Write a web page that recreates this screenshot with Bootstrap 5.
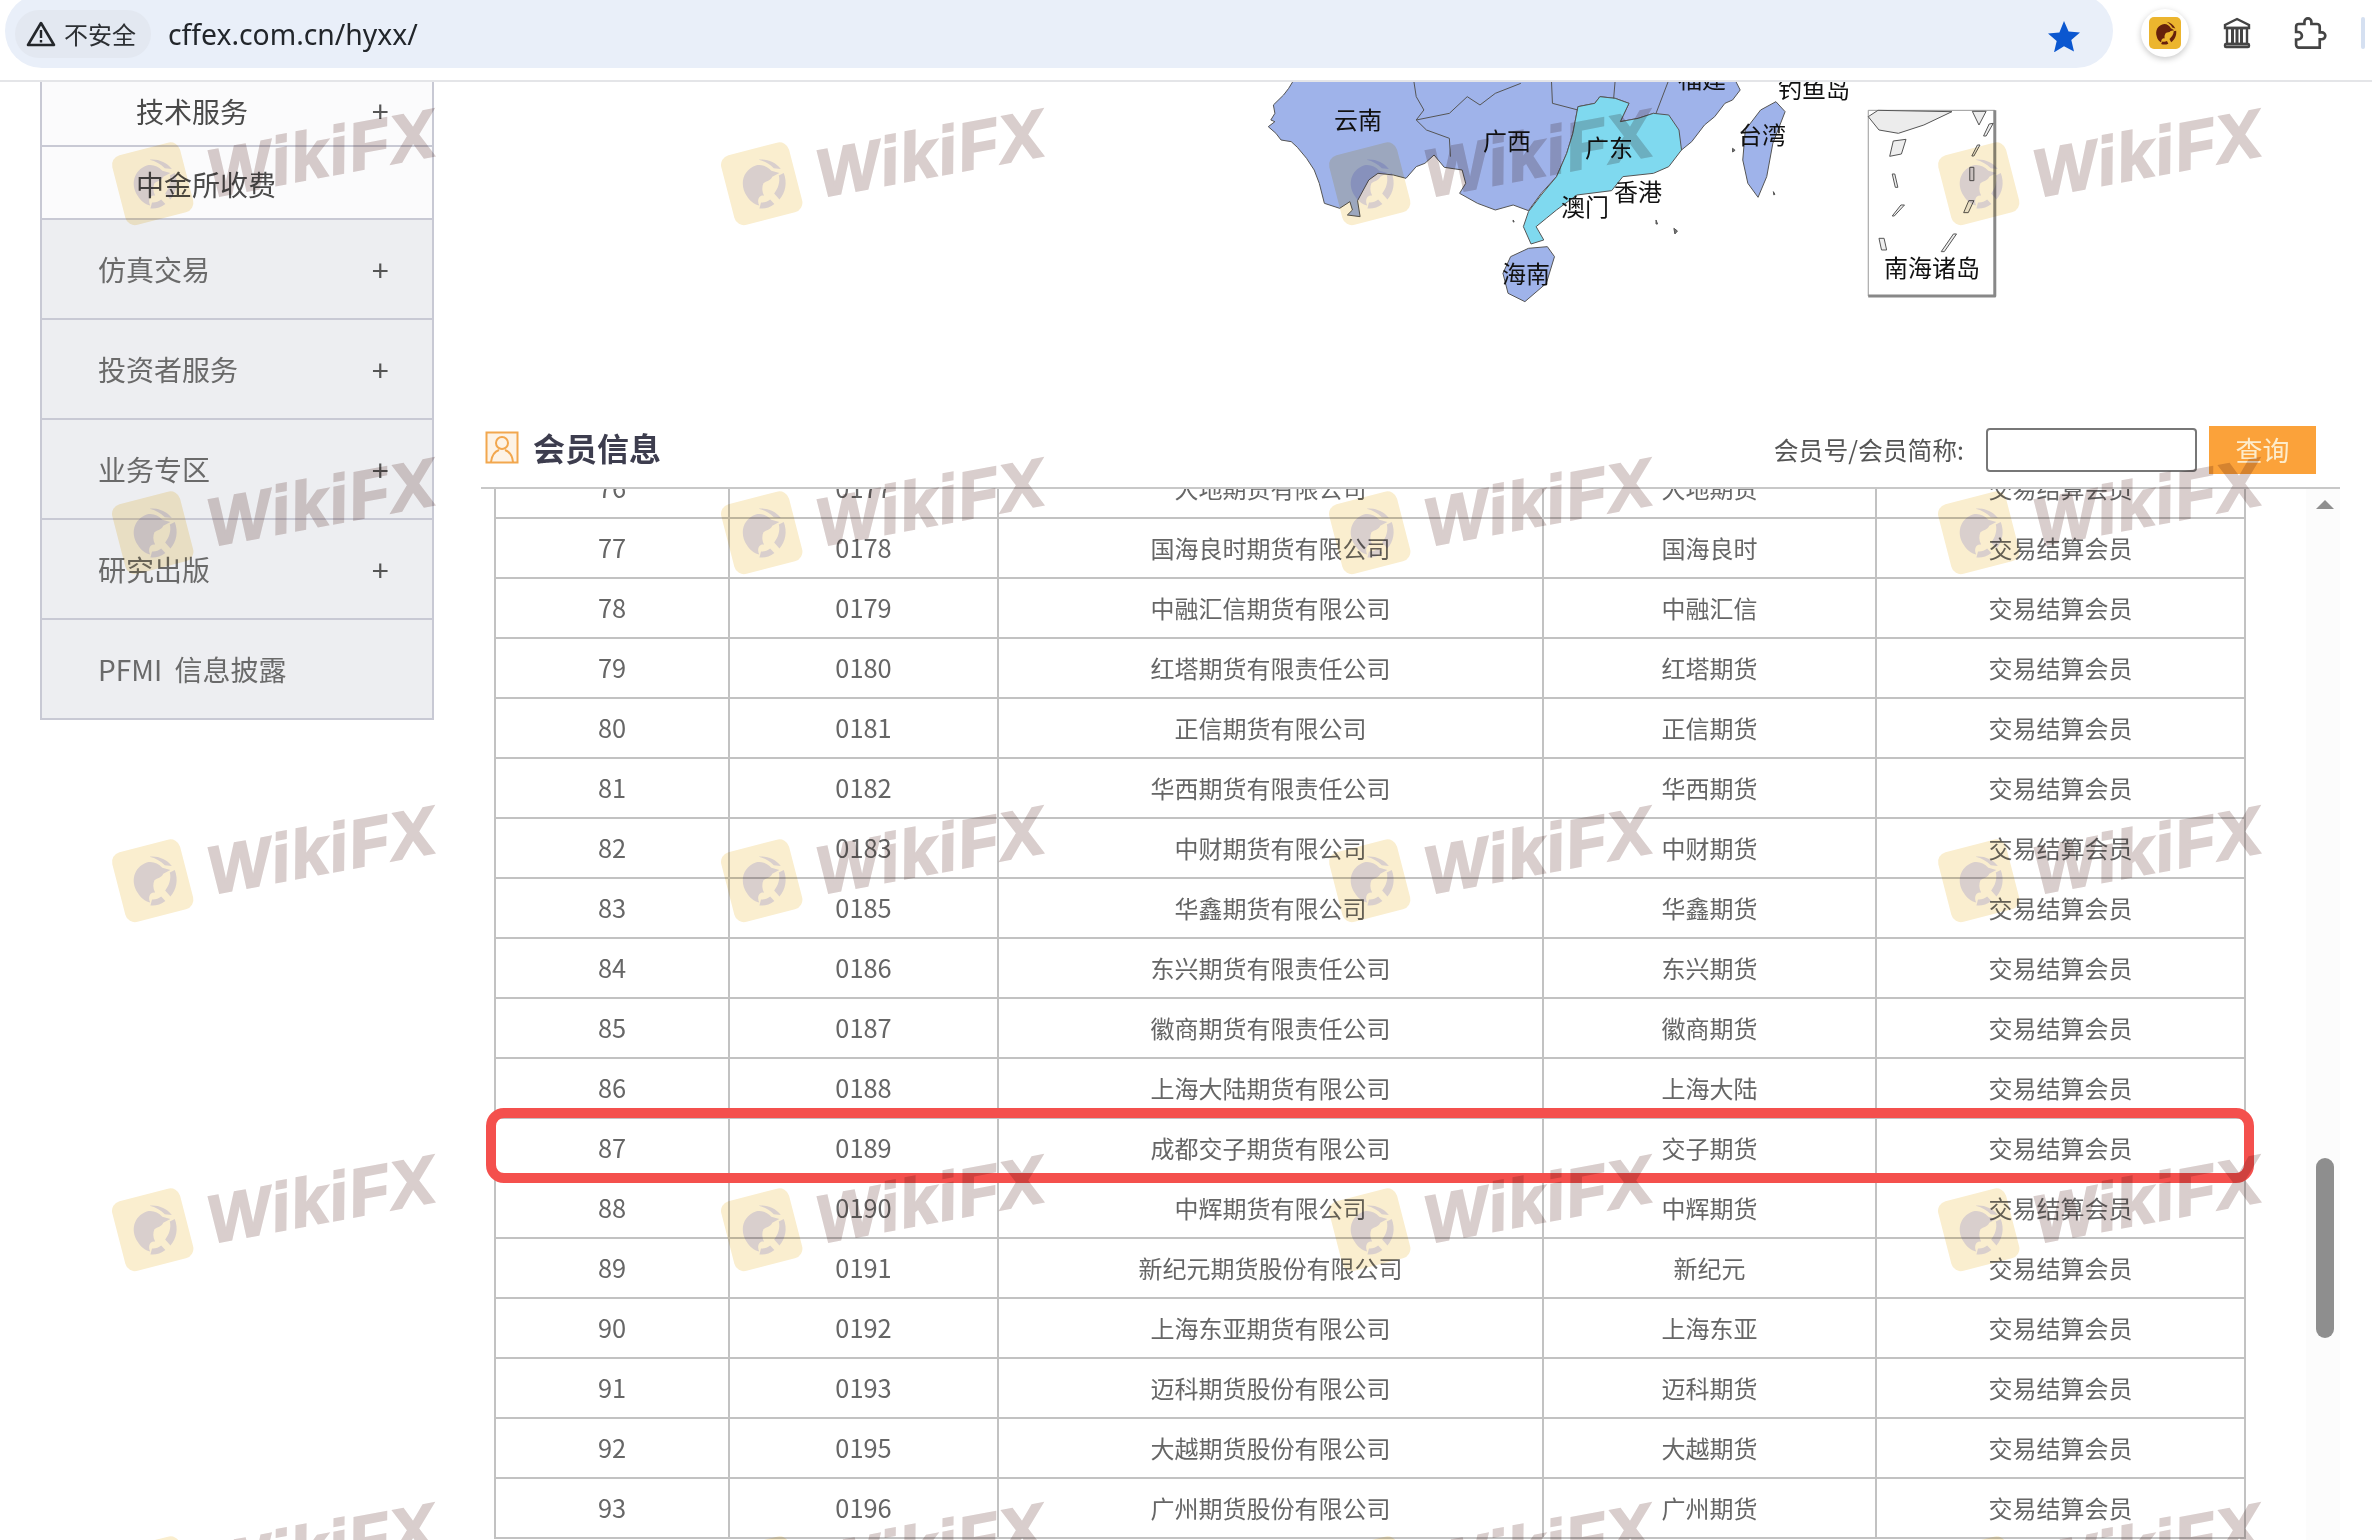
<!DOCTYPE html>
<html lang="zh-CN">
<head>
<meta charset="utf-8">
<title>cffex.com.cn/hyxx/</title>
<link href="https://cdn.jsdelivr.net/npm/bootstrap@5.3.0/dist/css/bootstrap.min.css" rel="stylesheet">
<style>
html,body{margin:0;background:#fff;}
body{font-family:"Noto Sans CJK SC","Noto Sans",sans-serif;}
.frame{width:2372px;height:1540px;overflow:hidden;background:#fff;}
.browser-bar{height:82px;flex:none;border-bottom:2px solid #e4e5e8;background:#fff;position:relative;z-index:5;}
.omni{width:2108px;height:74px;margin:-6px 0 0 5px;padding:0 32px 0 10px;background:#e9eff9;border-radius:37px;}
.chip{height:48px;width:136px;margin-top:6px;padding-left:11px;gap:8px;background:#e3e8f1;border-radius:24px;font-size:24px;color:#2c2f33;}
.url{margin:6px 0 0 17px;font-family:"Noto Sans",sans-serif;font-size:28.3px;color:#22262b;}
.star-ico{margin-top:10px;}
.ext-ring{width:48px;height:48px;margin-left:28px;background:#fff;border-radius:50%;box-shadow:0 2px 6px rgba(0,0,0,.22);}
.ext-logo{width:32px;height:32px;background:#ecb52e;border-radius:5px;}
.bank-ico{margin-left:34px;}
.puzzle-ico{margin-left:42px;}
.sep-bar{width:4px;height:32px;margin-left:34px;background:#d5e0f1;border-radius:2px;}
.tools{height:66px;}

.page-body{min-height:0;}
.side-menu{width:394px;flex:none;margin-left:40px;align-self:flex-start;border:solid #c8c9d4;border-width:0 2px;border-radius:0;}
.side-item{display:flex;align-items:center;justify-content:space-between;height:100px;padding:0 43px 0 56px;background:#edeef1;color:#6a6a6a;font-size:28px;border:0;border-bottom:2px solid #c8c9d4;border-radius:0!important;}
.side-sub{height:73px;padding-left:94px;padding-top:2px;background:#fbfbfc;color:#4a4a4a;}
.side-sub.top-sub{height:65px;padding-top:0;padding-bottom:6px;}
.side-latin{word-spacing:6px;}
.plus{font-family:"Liberation Sans",sans-serif;font-size:30px;font-weight:400;line-height:1;color:#555;padding-top:3px;}

.main-col{min-width:0;}
.map-zone{height:338px;position:relative;overflow:hidden;}
.map-svg{position:absolute;left:796px;top:-12px;}
.map-svg text{font-family:"Noto Sans CJK SC",sans-serif;font-size:24px;fill:#111;text-anchor:middle;dominant-baseline:central;}
.panel-head{height:69px;margin:0 32px 0 47px;padding:0 24px 13px 4px;border-bottom:2px solid #c8c8c8;}
.panel-title{margin:0 0 0 14px;font-size:32px;line-height:1;font-weight:700;color:#3d3d4e;}
.find-group{margin-top:6px;}
.find-label{font-size:24.8px;color:#555;margin-right:22px;}
.find-input{width:211px;height:44px;border:2px solid #777;border-radius:4px;background:#fff;margin-right:12px;padding:0 8px;}
.find-btn{width:107px;height:48px;padding:0;border:0;border-radius:0;background:#fba23a;color:#fdeccb;font-size:27px;}

.scroll-zone{flex:1;min-height:0;overflow:hidden;margin:0 32px 0 47px;position:relative;}
.member-table{width:1752px;margin:-32px 0 0 13px;table-layout:fixed;--bs-table-border-color:#c2c2c2;--bs-table-color:#666;--bs-table-bg:#fff;}
.member-table td{height:60px;padding:0;font-size:24px;line-height:1;border-width:2px;border-color:#c2c2c2;color:#666;text-align:center;vertical-align:middle;}
.member-table td:nth-child(-n+2){font-size:25.4px;}
.sb-track{position:absolute;right:0;top:0;bottom:0;width:34px;background:#fcfcfc;}
.sb-up{position:absolute;left:10px;top:11px;width:0;height:0;border:solid transparent;border-width:0 9px 9px;border-bottom-color:#8f8f8f;}
.sb-thumb{position:absolute;left:10px;top:669px;width:18px;height:180px;border-radius:9px;background:#8e8e8e;}

.red-box{position:absolute;left:486px;top:1108px;width:1768px;height:75px;border:10px solid #f4504d;border-radius:18px;z-index:3;pointer-events:none;}
.wm-layer{position:absolute;inset:0;z-index:4;pointer-events:none;mix-blend-mode:multiply;display:grid;grid-template-columns:repeat(4,608.5px);grid-auto-rows:348.5px;padding:144px 0 0 117px;}
.wm-cell{width:340px;height:80px;gap:21px;transform:rotate(-10.5deg);transform-origin:34px 36px;}
.wm-badge{width:70px;height:72px;flex:none;background:#faeecf;border-radius:10px;transform:rotate(-4deg);}
.wm-eagle{width:60px;height:60px;fill:#d9cfcd;}
.wm-word{font-family:"Liberation Sans",sans-serif;font-style:italic;font-weight:700;font-size:67px;line-height:1;letter-spacing:1.500px;color:#d9cecd;-webkit-text-stroke:2px #d9cecd;}
</style>
</head>
<body>
<svg width="0" height="0" class="d-block position-absolute">
  <defs>
    <g id="eagle">
      <path d="M21 64C13 42 25 20 48 18c10 0 18 6 23 15l12 7-13 3c-5 6-11 4-17 7-4 5-6 12-4 20-9-4-14 6-12 14-8-4-14-12-16-20Z"/>
      <path d="M55 10c14 2 26 11 32 24l-11-4c-5-9-12-15-21-20Z"/>
      <path d="M90 42c2 17-5 32-18 41l-6-12c8-6 15-16 15-27Z"/>
      <path d="M62 88c-9 4-18 4-26 1l5-9c5 2 11 1 16-1Z"/>
    </g>
  </defs>
</svg>
<div class="frame d-flex flex-column position-relative">
  <header class="browser-bar d-flex align-items-start">
    <div class="omni d-flex align-items-center">
      <div class="chip d-flex align-items-center">
        <svg width="30" height="28" viewBox="0 0 30 28"><path d="M15 3 28 25H2Z" fill="none" stroke="#24272b" stroke-width="2.6" stroke-linejoin="round"/><path d="M15 10v8M15 20v2.4" stroke="#24272b" stroke-width="2.4"/></svg>
        <span>不安全</span>
      </div>
      <span class="url">cffex.com.cn/hyxx/</span>
      <svg class="star-ico ms-auto" width="34" height="32" viewBox="0 0 34 32"><path d="M17 1l4.600 10.600 11.400 1-8.700 7.500 2.700 11.300L17 26.300 7 32.400l2.700-11.300L1 13.600l11.400-1Z" fill="#0b57d0"/></svg>
    </div>
    <div class="tools d-flex align-items-center">
      <div class="ext-ring d-flex align-items-center justify-content-center">
        <div class="ext-logo d-flex align-items-center justify-content-center">
          <svg width="28" height="28" viewBox="0 0 100 100" fill="#66200c"><use href="#eagle"/></svg>
        </div>
      </div>
      <svg class="bank-ico" width="28" height="32" viewBox="0 0 28 32" fill="none" stroke="#444" stroke-width="2.4"><path d="M14 2 26 8v3H2V8Z"/><rect x="4" y="11" width="20" height="16"/><path d="M9.500 12v14M14 12v14M18.500 12v14" stroke-width="3"/><rect x="2" y="27" width="24" height="3" rx="1"/></svg>
      <svg class="puzzle-ico" width="34" height="32" viewBox="0 0 24 23" fill="none" stroke="#444" stroke-width="1.900"><path d="M20.500 11H19V7c0-1.100-.9-2-2-2h-4V3.500C13 2.120 11.880 1 10.500 1S8 2.120 8 3.500V5H4c-1.100 0-1.990.9-1.990 2v3.800H3.500c1.490 0 2.700 1.210 2.700 2.700s-1.210 2.700-2.700 2.700H2V20c0 1.100.9 2 2 2h15v-6h1.500c1.380 0 2.500-1.120 2.500-2.500S21.880 11 20.500 11z"/></svg>
      <div class="sep-bar"></div>
    </div>
  </header>

  <div class="page-body d-flex flex-grow-1">
    <aside class="side-menu list-group">
      <div class="list-group-item side-item side-sub top-sub"><span>技术服务</span><span class="plus">+</span></div>
      <div class="list-group-item side-item side-sub"><span>中金所收费</span></div>
      <div class="list-group-item side-item"><span>仿真交易</span><span class="plus">+</span></div>
      <div class="list-group-item side-item"><span>投资者服务</span><span class="plus">+</span></div>
      <div class="list-group-item side-item"><span>业务专区</span><span class="plus">+</span></div>
      <div class="list-group-item side-item"><span>研究出版</span><span class="plus">+</span></div>
      <div class="list-group-item side-item"><span class="side-latin">PFMI 信息披露</span></div>
    </aside>

    <main class="main-col d-flex flex-column flex-grow-1">
      <div class="map-zone">
        <svg class="map-svg" width="800" height="250" viewBox="0 0 800 250">
          <g transform="scale(0.5102 0.3333)" stroke="#555" stroke-width="1" stroke-linejoin="round">
            <path vector-effect="non-scaling-stroke" fill="#9fb3ea" d="M125 30 115 55 105 75 85 105 88 130 80 150 88 155 75 170 90 190 100 210 120 215 132 232 150 265 165 300 175 340 185 400 215 415 235 395 240 420 230 435 255 440 250 392 272 330 290 310 320 315 345 325 365 290 382 280 400 255 420 292 455 300 462 340 450 370 485 400 520 420 555 405 585 422 610 370 640 320 660 250 672 190 682 110 715 100 725 80 755 85 782 100 765 155 800 145 830 130 860 140 885 240 905 215 930 165 950 140 970 100 985 90 1000 60 990 30Z"/>
            <path vector-effect="non-scaling-stroke" fill="#7fd9ef" d="M682 110 715 100 725 80 755 85 782 100 765 155 800 145 830 130 860 135 880 180 885 240 860 290 830 310 770 320 748 362 680 375 640 420 620 445 600 470 615 510 590 522 575 470 585 425 610 375 640 320 660 250 672 190Z"/>
            <path vector-effect="non-scaling-stroke" fill="none" d="M360 30 365 80 380 120 365 150 385 180 430 205 432 260M365 150 430 130 465 80 490 105 520 70 570 40M630 30 632 100 682 120M755 30 752 85M860 30 835 130"/>
            <path vector-effect="non-scaling-stroke" fill="#9fb3ea" d="M1070 95 1088 125 1064 220 1052 320 1035 382 1015 340 1005 270 1010 180 1040 120Z"/>
            <path vector-effect="non-scaling-stroke" fill="#9fb3ea" d="M622 530 636 560 620 640 578 695 545 670 535 610 550 560 585 535Z"/>
            <path vector-effect="non-scaling-stroke" fill="#777" d="M985 235l5 6-5 5ZM835 450l3 12-3 0ZM870 475l7 8-5 9ZM1065 365l3 8-2 2ZM555 450l2 6-2 0Z"/>
            <rect vector-effect="non-scaling-stroke" x="1251" y="121" width="248" height="557" fill="#fff" stroke="#999"/>
            <path vector-effect="non-scaling-stroke" fill="none" stroke="#888" stroke-width="3" d="M1251 678H1499V121"/>
            <path vector-effect="non-scaling-stroke" fill="#ececec" d="M1251 140 1270 121 1415 125 1360 165 1310 190 1272 180Z"/>
            <path vector-effect="non-scaling-stroke" fill="#ececec" d="M1455 124 1482 124 1468 165Z"/>
            <path vector-effect="non-scaling-stroke" fill="#eee" d="M1300 213 1325 208 1316 252 1293 259ZM1488 162 1496 160 1482 198 1477 198ZM1465 225 1470 225 1458 258 1454 258ZM1450 292 1458 292 1458 332 1450 332ZM1298 312 1303 312 1309 352 1304 352ZM1315 405 1322 405 1302 438 1298 438ZM1448 392 1458 392 1447 428 1438 428ZM1272 505 1282 505 1287 540 1277 540ZM1418 492 1424 492 1400 545 1394 545Z"/>
          </g>
          <text x="128" y="48.500">云南</text>
          <text x="277" y="69.500">广西</text>
          <text x="379" y="76.500">广东</text>
          <text x="408" y="120.500">香港</text>
          <text x="355" y="135.500">澳门</text>
          <text x="296" y="202.500">海南</text>
          <text x="532" y="63.500">台湾</text>
          <text x="472" y="7.500">福建</text>
          <text x="584" y="17">钓鱼岛</text>
          <text x="702" y="196.500">南海诸岛</text>
        </svg>
      </div>

      <div class="panel-head d-flex align-items-center">
        <svg width="34" height="33" viewBox="0 0 34 33" fill="none" stroke="#f2a74e" stroke-width="2"><rect x="1.500" y="1.500" width="31" height="30" fill="#fdf3e6"/><circle cx="17" cy="12" r="6"/><path d="M6 31c1-8 5-11 8-12M28 31c-1-8-5-11-8-12"/></svg>
        <h2 class="panel-title">会员信息</h2>
        <div class="find-group d-flex align-items-center ms-auto">
          <label class="find-label" for="memberNo">会员号/会员简称:</label>
          <input id="memberNo" class="find-input" type="text">
          <button class="btn find-btn" type="button">查询</button>
        </div>
      </div>

      <div class="scroll-zone">
        <table class="table table-bordered member-table">
          <colgroup><col style="width:234px"><col style="width:269px"><col style="width:545px"><col style="width:333px"><col style="width:369px"></colgroup>
          <tbody>
            <tr><td>76</td><td>0177</td><td>大地期货有限公司</td><td>大地期货</td><td>交易结算会员</td></tr>
            <tr><td>77</td><td>0178</td><td>国海良时期货有限公司</td><td>国海良时</td><td>交易结算会员</td></tr>
            <tr><td>78</td><td>0179</td><td>中融汇信期货有限公司</td><td>中融汇信</td><td>交易结算会员</td></tr>
            <tr><td>79</td><td>0180</td><td>红塔期货有限责任公司</td><td>红塔期货</td><td>交易结算会员</td></tr>
            <tr><td>80</td><td>0181</td><td>正信期货有限公司</td><td>正信期货</td><td>交易结算会员</td></tr>
            <tr><td>81</td><td>0182</td><td>华西期货有限责任公司</td><td>华西期货</td><td>交易结算会员</td></tr>
            <tr><td>82</td><td>0183</td><td>中财期货有限公司</td><td>中财期货</td><td>交易结算会员</td></tr>
            <tr><td>83</td><td>0185</td><td>华鑫期货有限公司</td><td>华鑫期货</td><td>交易结算会员</td></tr>
            <tr><td>84</td><td>0186</td><td>东兴期货有限责任公司</td><td>东兴期货</td><td>交易结算会员</td></tr>
            <tr><td>85</td><td>0187</td><td>徽商期货有限责任公司</td><td>徽商期货</td><td>交易结算会员</td></tr>
            <tr><td>86</td><td>0188</td><td>上海大陆期货有限公司</td><td>上海大陆</td><td>交易结算会员</td></tr>
            <tr><td>87</td><td>0189</td><td>成都交子期货有限公司</td><td>交子期货</td><td>交易结算会员</td></tr>
            <tr><td>88</td><td>0190</td><td>中辉期货有限公司</td><td>中辉期货</td><td>交易结算会员</td></tr>
            <tr><td>89</td><td>0191</td><td>新纪元期货股份有限公司</td><td>新纪元</td><td>交易结算会员</td></tr>
            <tr><td>90</td><td>0192</td><td>上海东亚期货有限公司</td><td>上海东亚</td><td>交易结算会员</td></tr>
            <tr><td>91</td><td>0193</td><td>迈科期货股份有限公司</td><td>迈科期货</td><td>交易结算会员</td></tr>
            <tr><td>92</td><td>0195</td><td>大越期货股份有限公司</td><td>大越期货</td><td>交易结算会员</td></tr>
            <tr><td>93</td><td>0196</td><td>广州期货股份有限公司</td><td>广州期货</td><td>交易结算会员</td></tr>
          </tbody>
        </table>
        <div class="sb-track"><div class="sb-up"></div><div class="sb-thumb"></div></div>
      </div>
    </main>
  </div>

  <div class="red-box"></div>

  <div class="wm-layer" aria-hidden="true">
    <div class="wm-cell d-flex align-items-center"><span class="wm-badge d-flex align-items-center justify-content-center"><svg class="wm-eagle" viewBox="0 0 100 100"><use href="#eagle"/></svg></span><span class="wm-word">WikiFX</span></div>
    <div class="wm-cell d-flex align-items-center"><span class="wm-badge d-flex align-items-center justify-content-center"><svg class="wm-eagle" viewBox="0 0 100 100"><use href="#eagle"/></svg></span><span class="wm-word">WikiFX</span></div>
    <div class="wm-cell d-flex align-items-center"><span class="wm-badge d-flex align-items-center justify-content-center"><svg class="wm-eagle" viewBox="0 0 100 100"><use href="#eagle"/></svg></span><span class="wm-word">WikiFX</span></div>
    <div class="wm-cell d-flex align-items-center"><span class="wm-badge d-flex align-items-center justify-content-center"><svg class="wm-eagle" viewBox="0 0 100 100"><use href="#eagle"/></svg></span><span class="wm-word">WikiFX</span></div>
    <div class="wm-cell d-flex align-items-center"><span class="wm-badge d-flex align-items-center justify-content-center"><svg class="wm-eagle" viewBox="0 0 100 100"><use href="#eagle"/></svg></span><span class="wm-word">WikiFX</span></div>
    <div class="wm-cell d-flex align-items-center"><span class="wm-badge d-flex align-items-center justify-content-center"><svg class="wm-eagle" viewBox="0 0 100 100"><use href="#eagle"/></svg></span><span class="wm-word">WikiFX</span></div>
    <div class="wm-cell d-flex align-items-center"><span class="wm-badge d-flex align-items-center justify-content-center"><svg class="wm-eagle" viewBox="0 0 100 100"><use href="#eagle"/></svg></span><span class="wm-word">WikiFX</span></div>
    <div class="wm-cell d-flex align-items-center"><span class="wm-badge d-flex align-items-center justify-content-center"><svg class="wm-eagle" viewBox="0 0 100 100"><use href="#eagle"/></svg></span><span class="wm-word">WikiFX</span></div>
    <div class="wm-cell d-flex align-items-center"><span class="wm-badge d-flex align-items-center justify-content-center"><svg class="wm-eagle" viewBox="0 0 100 100"><use href="#eagle"/></svg></span><span class="wm-word">WikiFX</span></div>
    <div class="wm-cell d-flex align-items-center"><span class="wm-badge d-flex align-items-center justify-content-center"><svg class="wm-eagle" viewBox="0 0 100 100"><use href="#eagle"/></svg></span><span class="wm-word">WikiFX</span></div>
    <div class="wm-cell d-flex align-items-center"><span class="wm-badge d-flex align-items-center justify-content-center"><svg class="wm-eagle" viewBox="0 0 100 100"><use href="#eagle"/></svg></span><span class="wm-word">WikiFX</span></div>
    <div class="wm-cell d-flex align-items-center"><span class="wm-badge d-flex align-items-center justify-content-center"><svg class="wm-eagle" viewBox="0 0 100 100"><use href="#eagle"/></svg></span><span class="wm-word">WikiFX</span></div>
    <div class="wm-cell d-flex align-items-center"><span class="wm-badge d-flex align-items-center justify-content-center"><svg class="wm-eagle" viewBox="0 0 100 100"><use href="#eagle"/></svg></span><span class="wm-word">WikiFX</span></div>
    <div class="wm-cell d-flex align-items-center"><span class="wm-badge d-flex align-items-center justify-content-center"><svg class="wm-eagle" viewBox="0 0 100 100"><use href="#eagle"/></svg></span><span class="wm-word">WikiFX</span></div>
    <div class="wm-cell d-flex align-items-center"><span class="wm-badge d-flex align-items-center justify-content-center"><svg class="wm-eagle" viewBox="0 0 100 100"><use href="#eagle"/></svg></span><span class="wm-word">WikiFX</span></div>
    <div class="wm-cell d-flex align-items-center"><span class="wm-badge d-flex align-items-center justify-content-center"><svg class="wm-eagle" viewBox="0 0 100 100"><use href="#eagle"/></svg></span><span class="wm-word">WikiFX</span></div>
    <div class="wm-cell d-flex align-items-center"><span class="wm-badge d-flex align-items-center justify-content-center"><svg class="wm-eagle" viewBox="0 0 100 100"><use href="#eagle"/></svg></span><span class="wm-word">WikiFX</span></div>
    <div class="wm-cell d-flex align-items-center"><span class="wm-badge d-flex align-items-center justify-content-center"><svg class="wm-eagle" viewBox="0 0 100 100"><use href="#eagle"/></svg></span><span class="wm-word">WikiFX</span></div>
    <div class="wm-cell d-flex align-items-center"><span class="wm-badge d-flex align-items-center justify-content-center"><svg class="wm-eagle" viewBox="0 0 100 100"><use href="#eagle"/></svg></span><span class="wm-word">WikiFX</span></div>
    <div class="wm-cell d-flex align-items-center"><span class="wm-badge d-flex align-items-center justify-content-center"><svg class="wm-eagle" viewBox="0 0 100 100"><use href="#eagle"/></svg></span><span class="wm-word">WikiFX</span></div>
  </div>
</div>
<script src="https://cdn.jsdelivr.net/npm/bootstrap@5.3.0/dist/js/bootstrap.bundle.min.js"></script>
</body>
</html>
